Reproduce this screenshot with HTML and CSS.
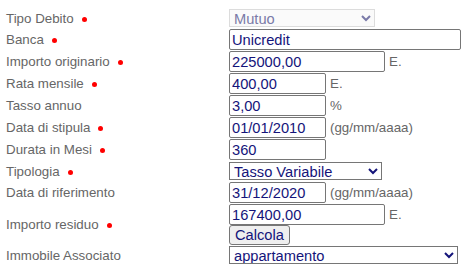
FILE: index.html
```html
<!DOCTYPE html>
<html lang="it">
<head>
<meta charset="utf-8">
<title>Debito</title>
<link rel="stylesheet" href="styles.css">
</head>
<body>
<div class="form">
  <div class="row row-short">
    <div class="label">Tipo Debito<span class="req"></span></div>
    <div class="field">
      <select class="sel sel-tipo" disabled><option>Mutuo</option></select>
    </div>
  </div>
  <div class="row">
    <div class="label">Banca<span class="req"></span></div>
    <div class="field"><input class="inp w-xl" type="text" value="Unicredit"></div>
  </div>
  <div class="row">
    <div class="label">Importo originario<span class="req"></span></div>
    <div class="field"><input class="inp w-md" type="text" value="225000,00"><span class="suffix">E.</span></div>
  </div>
  <div class="row">
    <div class="label">Rata mensile<span class="req"></span></div>
    <div class="field"><input class="inp w-sm" type="text" value="400,00"><span class="suffix">E.</span></div>
  </div>
  <div class="row">
    <div class="label">Tasso annuo</div>
    <div class="field"><input class="inp w-sm" type="text" value="3,00"><span class="suffix">%</span></div>
  </div>
  <div class="row">
    <div class="label">Data di stipula<span class="req"></span></div>
    <div class="field"><input class="inp w-sm" type="text" value="01/01/2010"><span class="suffix">(gg/mm/aaaa)</span></div>
  </div>
  <div class="row">
    <div class="label">Durata in Mesi<span class="req"></span></div>
    <div class="field"><input class="inp w-sm" type="text" value="360"></div>
  </div>
  <div class="row row-short">
    <div class="label">Tipologia<span class="req"></span></div>
    <div class="field">
      <select class="sel sel-tipologia"><option>Tasso Variabile</option></select>
    </div>
  </div>
  <div class="row">
    <div class="label">Data di riferimento</div>
    <div class="field"><input class="inp w-sm" type="text" value="31/12/2020"><span class="suffix">(gg/mm/aaaa)</span></div>
  </div>
  <div class="row row-tall">
    <div class="label">Importo residuo<span class="req"></span></div>
    <div class="field field-stack">
      <div class="line"><input class="inp w-md" type="text" value="167400,00"><span class="suffix">E.</span></div>
      <button class="btn" type="button">Calcola</button>
    </div>
  </div>
  <div class="row row-sel">
    <div class="label">Immobile Associato</div>
    <div class="field">
      <select class="sel sel-immobile"><option>appartamento</option></select>
    </div>
  </div>
</div>
</body>
</html>
```

FILE: styles.css
```css
html, body {
  margin: 0;
  padding: 0;
  background: #ffffff;
}

body {
  font-family: "Liberation Sans", Arial, sans-serif;
  font-size: 13.33px;
  color: #666666;
}

.form {
  display: flex;
  flex-direction: column;
  gap: 1px;
  padding: 8px 0 0 6px;
}

.row {
  display: flex;
  align-items: center;
  height: 21px;
}

.row-short {
  height: 20px;
}

.row-tall {
  height: 41px;
}

.row-sel {
  height: 18px;
}

.label {
  width: 223px;
  flex: none;
  display: flex;
  align-items: center;
  white-space: nowrap;
}

.req {
  display: inline-block;
  width: 5px;
  height: 5px;
  border-radius: 50%;
  background: #ff0000;
  margin-left: 8px;
  margin-top: 2px;
}

.field {
  display: flex;
  align-items: center;
  gap: 4px;
}

.field-stack {
  flex-direction: column;
  align-items: flex-start;
  gap: 0;
}

.line {
  display: flex;
  align-items: center;
  gap: 4px;
}

.inp {
  box-sizing: border-box;
  height: 21px;
  margin: 0;
  padding: 1px 2px;
  border: 1px solid #767676;
  border-radius: 2px;
  font-family: "Liberation Sans", Arial, sans-serif;
  font-size: 14.67px;
  color: #14147a;
  background: #ffffff;
  outline: none;
}

.w-xl { width: 232px; }
.w-md { width: 156px; }
.w-sm { width: 97px; }

.suffix {
  color: #666666;
  font-size: 13.33px;
}

.sel {
  box-sizing: border-box;
  height: 18px;
  margin: 0;
  padding: 0;
  border: 1px solid #767676;
  border-radius: 0;
  font-family: "Liberation Sans", Arial, sans-serif;
  font-size: 14.67px;
  color: #14147a;
  background-color: #ffffff;
}

.sel-tipo {
  width: 146px;
  color: #7a7aa8;
  border-color: #dcdcdc;
  background-color: #fafafa;
  opacity: 1;
}

.sel-tipologia { width: 153px; }
.sel-immobile { width: 229px; }

.btn {
  box-sizing: border-box;
  height: 20px;
  margin: 0;
  padding: 0 5px;
  border: 1px solid #767676;
  border-radius: 3px;
  background: #efefef;
  font-family: "Liberation Sans", Arial, sans-serif;
  font-size: 14.67px;
  color: #14147a;
}
```
